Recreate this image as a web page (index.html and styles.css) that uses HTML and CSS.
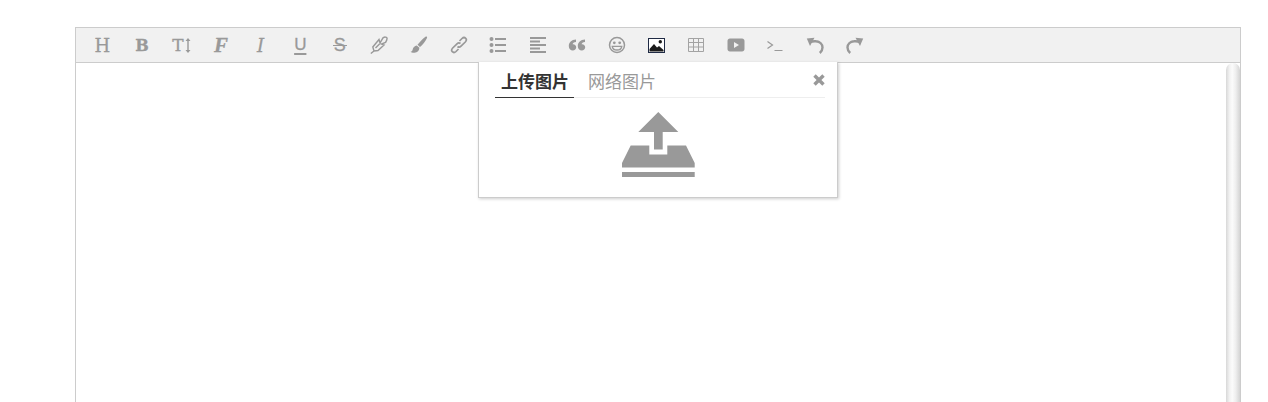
FILE: index.html
```html
<!DOCTYPE html>
<html lang="zh-CN">
<head>
    <meta charset="UTF-8">
    <meta name="viewport" content="width=device-width, initial-scale=1.0">
    <title>编辑器</title>
    <link rel="stylesheet" href="styles.css">
</head>
<body>
    <div class="editor">
        <div class="toolbar">
            <a class="tool txt-h">H</a>
            <a class="tool txt-b">B</a>
            <a class="tool txt-t">T<svg class="size-arrow" width="6" height="15" viewBox="0 0 6 15"><path d="M3 0 L5.500 3 H3.700 V12 H5.500 L3 15 L.5 12 H2.300 V3 H.5Z"/></svg></a>
            <a class="tool txt-f">F</a>
            <a class="tool txt-i">I</a>
            <a class="tool txt-u">U</a>
            <a class="tool txt-s">S</a>
            <a class="tool">
                <svg width="18" height="18" viewBox="0 0 18 18"><path class="line" stroke-width="1.400" d="M.8 17.500 L4 15 M4 15 L2.800 11 L9 3.500 L10 7 L13 1.800 C14.500 .8 16.500 .8 17 2 C17.300 3.500 16.500 5 15.500 6.500 L11.500 8 L14 9 L8 14.500 L4 15 M5.500 12 L9.500 8"/></svg>
            </a>
            <a class="tool">
                <svg width="18" height="18" viewBox="0 0 18 18"><path class="fill" d="M15.500 .8 C16.400 .2 17.500 1 17 2 C15.500 5 12.500 9 10 11 L7.500 8.800 C10 6 13 2.500 15.500 .8Z M6.800 9.500 L9.400 11.700 C9.300 14.500 7.500 16.500 4.500 16.800 C3 17 1.500 16.600 .6 15.800 C2 15.500 2.400 14.800 2.700 13.500 C3 11.500 4.500 10 6.800 9.500Z"/></svg>
            </a>
            <a class="tool">
                <svg width="18" height="18" viewBox="0 0 18 18"><path class="line" stroke-width="1.700" d="M7.500 10.500 C8.700 11.500 10 11.200 11 10.200 L15.300 6 C16.700 4.500 16.600 3.200 15.700 2.300 C14.700 1.300 13.300 1.300 12 2.500 L9.500 5 M10.500 7.500 C9.300 6.500 8 6.800 7 7.800 L2.700 12 C1.300 13.500 1.400 14.800 2.300 15.700 C3.300 16.700 4.700 16.700 6 15.500 L8.500 13"/></svg>
            </a>
            <a class="tool">
                <svg width="18" height="18" viewBox="0 0 18 18"><circle class="fill" cx="2.500" cy="3" r="2"/><circle class="fill" cx="2.500" cy="9" r="2"/><circle class="fill" cx="2.500" cy="15" r="2"/><path class="fill" d="M6 2 H17 V4 H6Z M6 8 H17 V10 H6Z M6 14 H17 V16 H6Z"/></svg>
            </a>
            <a class="tool">
                <svg width="18" height="18" viewBox="0 0 18 18"><path class="fill" d="M1 1 H17 V3 H1Z M1 4.500 H11 V6.500 H1Z M1 8 H17 V10 H1Z M1 11.500 H11 V13.500 H1Z M1 15 H17 V17 H1Z"/></svg>
            </a>
            <a class="tool">
                <svg width="18" height="18" viewBox="0 0 18 18"><path class="fill" d="M8 3.500 V6 C5.800 6.300 4.800 7.200 4.600 8.300 C6.600 8 8.200 9.500 8.200 11.300 C8.200 13.300 6.700 14.500 4.800 14.500 C2.500 14.500 .8 12.800 .8 10 C.8 6.300 3.500 3.800 8 3.500Z M17 3.500 V6 C14.800 6.300 13.800 7.200 13.600 8.300 C15.600 8 17.200 9.500 17.200 11.300 C17.200 13.300 15.700 14.500 13.800 14.500 C11.500 14.500 9.800 12.800 9.800 10 C9.800 6.300 12.500 3.800 17 3.500Z"/></svg>
            </a>
            <a class="tool">
                <svg width="18" height="18" viewBox="0 0 18 18"><circle class="line" cx="9" cy="9" r="7.500" stroke-width="1.500"/><circle class="fill" cx="6.300" cy="6.800" r="1.400"/><circle class="fill" cx="11.700" cy="6.800" r="1.400"/><path class="line" stroke-width="1.300" d="M4.200 10.300 H13.800 C13.500 12.800 11.500 14 9 14 C6.500 14 4.500 12.800 4.200 10.300Z"/></svg>
            </a>
            <a class="tool">
                <svg width="17" height="15" viewBox="0 0 17 15"><rect x=".5" y=".5" width="16" height="14" fill="#fff" stroke="#1f2a44"/><path d="M1.500 13.500 V11 L6 6 L9 9.500 L11 8 L15.500 12 V13.500Z" fill="#1b1b1b"/><circle cx="12.300" cy="3.800" r="1.700" fill="#1b1b1b"/></svg>
            </a>
            <a class="tool">
                <svg width="18" height="16" viewBox="0 0 18 16"><path class="grid" d="M1.500 1.500 H16.500 V14.500 H1.500Z M1.500 5.500 H16.500 M1.500 10 H16.500 M6.500 1.500 V14.500 M11.500 1.500 V14.500"/></svg>
            </a>
            <a class="tool">
                <svg width="18" height="14" viewBox="0 0 18 14"><path class="fill" fill-rule="evenodd" d="M3 .5 H15 C16.500 .5 17.500 1.500 17.500 3 V11 C17.500 12.500 16.500 13.500 15 13.500 H3 C1.500 13.500 .5 12.500 .5 11 V3 C.5 1.500 1.500 .5 3 .5Z M7 4 V10 L12 7Z"/></svg>
            </a>
            <a class="tool">
                <svg width="16" height="14" viewBox="0 0 16 14"><path class="line" stroke-width="1.200" d="M.5 3.500 L5.500 7 L.5 10.500 M7.500 12.500 H15.500"/></svg>
            </a>
            <a class="tool">
                <svg width="18" height="17" viewBox="0 0 18 17"><path class="line" stroke-width="2.400" d="M4 5 C6 4.300 8 4 10 4.300 C14 4.800 16.500 7.500 16.500 10.500 C16.500 12.500 15.500 14.500 13.800 16"/><path class="fill" d="M.8 1.500 L8.500 .8 L4 9Z"/></svg>
            </a>
            <a class="tool">
                <svg width="18" height="17" viewBox="0 0 18 17"><path class="line" stroke-width="2.400" d="M14 5 C12 4.300 10 4 8 4.300 C4 4.800 1.500 7.500 1.500 10.500 C1.500 12.500 2.500 14.500 4.200 16"/><path class="fill" d="M17.200 1.500 L9.500 .8 L14 9Z"/></svg>
            </a>
        </div>
        <div class="editor-body">
            <div class="writing-area"></div>
            <div class="scroll-thumb"></div>
        </div>

        <div class="popup">
            <div class="popup-tabs">
                <span class="tab active">上传图片</span>
                <span class="tab">网络图片</span>
                <svg class="popup-close" width="12" height="12" viewBox="0 0 12 12"><path d="M2.700 .3 L6 3.600 L9.300 .3 L11.700 2.700 L8.400 6 L11.700 9.300 L9.300 11.700 L6 8.400 L2.700 11.700 L.3 9.300 L3.600 6 L.3 2.700Z"/></svg>
            </div>
            <div class="upload">
                <svg width="73" height="66" viewBox="0 0 73 66"><path d="M36.300 0 L56.300 20 H40.700 V37.500 H32 V20 H16.300Z M8.700 33.500 H27.300 V42.500 H45.300 V33.500 H64 L72.700 51 V55.500 H0 V51Z M0 60 H72.700 V65 H0Z"/></svg>
            </div>
        </div>
    </div>
</body>
</html>
```

FILE: styles.css
```css
html, body{
    height: 100%;
    overflow: hidden;
}

body{
    margin: 0;
    padding: 27px 27px 0 75px;
    box-sizing: border-box;
    background: white;
}

.editor{
    position: relative;
    height: 374px;
    border: 1px solid #ccc;
    border-bottom: none;
    display: flex;
    flex-direction: column;
}

.toolbar{
    height: 34px;
    flex-shrink: 0;
    display: flex;
    align-items: center;
    padding-left: 6.5px;
    background: #f1f1f1;
    border-bottom: 1px solid #ccc;
}

.tool{
    width: 39.6px;
    height: 34px;
    flex-shrink: 0;
    display: flex;
    align-items: center;
    justify-content: center;
    color: #999;
    font-family: "DejaVu Serif", serif;
    font-size: 17px;
    -webkit-text-stroke: 0.3px #999;
}

.tool svg{
    display: block;
}

.fill{
    fill: #999;
}

/* stroke-width comes from the attribute on each path */
.line{
    fill: none;
    stroke: #999;
}

.grid{
    fill: none;
    stroke: #a3a3a3;
}

.txt-h{
    font-size: 18px;
}

.txt-b{
    font-weight: bold;
    font-size: 16px;
}

.txt-t{
    font-size: 17px;
}

.size-arrow{
    fill: #999;
    margin-left: 1px;
}

.txt-f{
    font-family: "Liberation Serif", serif;
    font-style: italic;
    font-weight: bold;
    font-size: 21px;
}

.txt-i{
    font-style: italic;
    font-size: 18px;
}

.txt-u{
    font-family: "Liberation Sans", sans-serif;
    font-size: 17px;
    text-decoration: underline;
    text-decoration-thickness: 2px;
    text-underline-offset: 3px;
}

.txt-s{
    font-family: "Liberation Sans", sans-serif;
    font-size: 18px;
    position: relative;
}

.txt-s::after{
    content: "";
    position: absolute;
    left: 13px;
    width: 14px;
    height: 1px;
    top: 17px;
    background: #999;
}

.editor-body{
    flex: 1;
    display: flex;
}

.writing-area{
    flex: 1;
}

.scroll-thumb{
    width: 14px;
    border-radius: 7px 7px 0 0;
    background: linear-gradient(to right, #d8d8d8, #f2f2f2 25%, #fbfbfb 45%, #eee 70%, #d4d4d4);
}

.popup{
    position: absolute;
    top: 34px;
    left: 402px;
    width: 330px;
    height: 135px;
    background: white;
    border: 1px solid #ccc;
    border-top: none;
    box-shadow: 1px 1px 3px rgba(0, 0, 0, 0.2);
    padding: 0 12px 0 16px;
}

.popup-tabs{
    position: relative;
    height: 35px;
    display: flex;
    border-bottom: 1px solid #eee;
    font-family: "Noto Sans CJK SC", sans-serif;
    font-size: 17px;
}

.tab{
    height: 35px;
    line-height: 38px;
    padding: 0 6px;
    margin-right: 8px;
    color: #999;
    box-sizing: border-box;
    white-space: nowrap;
}

.tab.active{
    color: #333;
    font-weight: bold;
    height: 36px;
    padding-right: 5px;
    border-bottom: 1px solid #333;
}

.popup-close{
    position: absolute;
    top: 12px;
    right: 0;
    fill: #999;
}

.upload{
    display: flex;
    justify-content: center;
    padding: 14px 3px 0 0;
}

.upload svg{
    fill: #999;
}
```
